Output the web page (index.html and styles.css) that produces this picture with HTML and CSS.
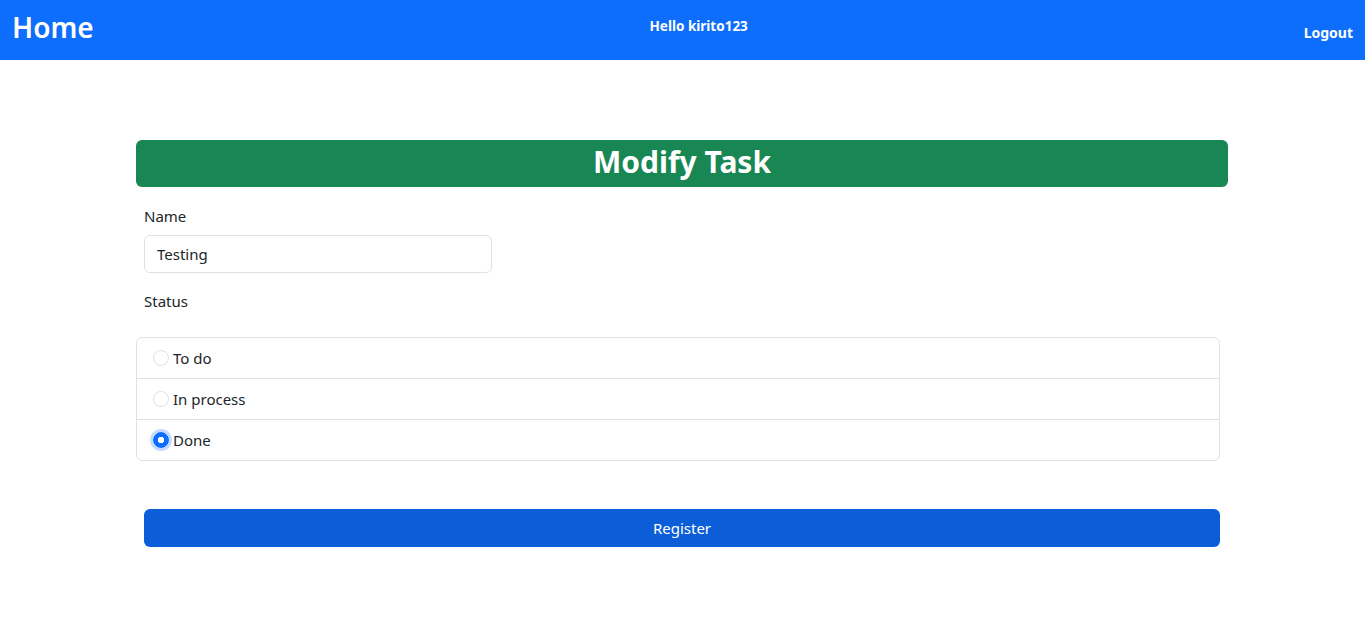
FILE: index.html
```html
<!DOCTYPE html>
<html lang="en">
<head>
<meta charset="utf-8">
<title>Modify Task</title>
<link rel="stylesheet" href="styles.css">
</head>
<body>
<nav class="navbar">
  <a class="brand" href="#">Home</a>
  <span class="hello">Hello kirito123</span>
  <a class="logout" href="#">Logout</a>
</nav>
<main class="page">
  <div class="panel">
    <h1 class="title">Modify Task</h1>
    <form class="form">
      <label class="label" for="name">Name</label>
      <input class="input" id="name" type="text" value="Testing">
      <div class="label status-label">Status</div>
      <ul class="list-group">
        <li class="item"><input class="radio" type="radio" name="st" id="s1"><label for="s1">To do</label></li>
        <li class="item"><input class="radio" type="radio" name="st" id="s2"><label for="s2">In process</label></li>
        <li class="item"><input class="radio checked" type="radio" name="st" id="s3" checked><label for="s3">Done</label></li>
      </ul>
      <button class="btn" type="button">Register</button>
    </form>
  </div>
</main>
</body>
</html>
```
FILE: styles.css
```css
* { box-sizing: border-box; }
body {
  margin: 0;
  font-family: "Noto Sans", "Open Sans", sans-serif;
  font-size: 15px;
  color: #212529;
  background: #fff;
}
.navbar {
  height: 60px;
  background: #0d6efd;
  display: flex;
  justify-content: space-between;
  align-items: flex-start;
  padding: 0 12px;
}
.brand {
  color: #fff;
  text-decoration: none;
  font-size: 28px;
  font-weight: 600;
  line-height: 1;
  margin-top: 13px;
}
.hello {
  color: #fff;
  font-size: 13.5px;
  font-weight: 700;
  margin-top: 16px;
  line-height: 20px;
}
.logout {
  color: #fff;
  text-decoration: none;
  font-size: 14px;
  font-weight: 700;
  margin-top: 23px;
  line-height: 20px;
}
.page {
  padding: 80px 137px 0 136px;
}
.title {
  margin: 0;
  height: 47px;
  background: #198754;
  color: #fff;
  border-radius: 6px;
  text-align: center;
  font-size: 30px;
  font-weight: 700;
  line-height: 43px;
}
.form {
  display: flex;
  flex-direction: column;
  align-items: flex-start;
  padding-top: 20px;
}
.label {
  margin-left: 8px;
  line-height: 18px;
  margin-bottom: 10px;
}
.input {
  margin-left: 8px;
  width: 348px;
  height: 38px;
  border: 1px solid #dee2e6;
  border-radius: 6px;
  padding: 0 12px;
  font: inherit;
  font-size: 15px;
  color: #212529;
}
.status-label {
  margin-top: 19px;
  margin-bottom: 27px;
}
.list-group {
  list-style: none;
  margin: 0;
  padding: 0;
  width: 1084px;
  border: 1px solid #dee2e6;
  border-radius: 6px;
}
.item {
  height: 41px;
  display: flex;
  align-items: center;
  padding-left: 16px;
  border-top: 1px solid #dee2e6;
}
.item:first-child { border-top: 0; height: 40px; }
.radio {
  appearance: none;
  -webkit-appearance: none;
  width: 16px;
  height: 16px;
  margin: 0 4px 0 0;
  border: 1px solid #dee2e6;
  border-radius: 50%;
  background: #fff;
}
.radio.checked {
  border-color: #0d6efd;
  background: radial-gradient(circle, #fff 0 3px, #0d6efd 3.5px);
  box-shadow: 0 0 0 3px rgba(13, 110, 253, 0.25);
}
.btn {
  margin-top: 48px;
  margin-left: 8px;
  width: 1076px;
  height: 38px;
  border: 0;
  border-radius: 6px;
  background: #0b5ed7;
  color: #fff;
  font: inherit;
  font-size: 15px;
}
```
